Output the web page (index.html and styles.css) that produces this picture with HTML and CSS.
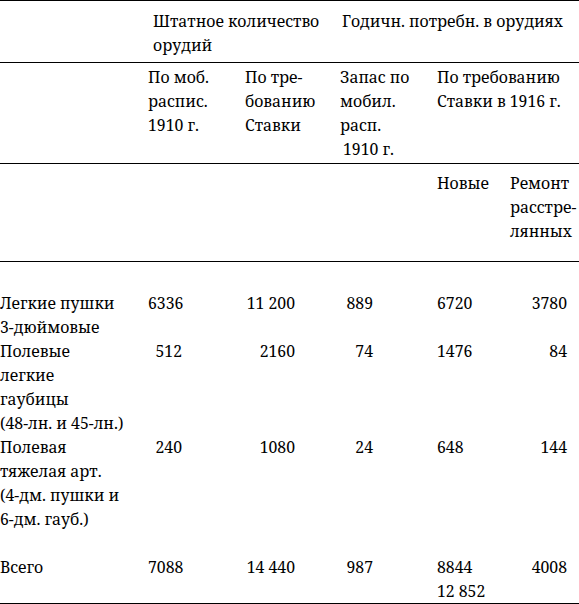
FILE: index.html
```html
<!DOCTYPE html>
<html lang="ru">
<head>
<meta charset="utf-8">
<link rel="stylesheet" href="styles.css">
</head>
<body>
<table class="t">
  <colgroup>
    <col class="c1"><col class="c2"><col class="c3"><col class="c4"><col class="c5"><col class="c6">
  </colgroup>
  <thead>
    <tr class="h1">
      <th></th>
      <th colspan="2" class="shtat">Штатное количество<br>орудий</th>
      <th colspan="3" class="god">Годичн. потребн. в орудиях</th>
    </tr>
    <tr class="h2">
      <th></th>
      <th>По моб.<br>распис.<br>1910 г.</th>
      <th class="c3h">По тре-<br>бованию<br>Ставки</th>
      <th>Запас по<br>мобил.<br>расп.<br><span class="ind">1910 г.</span></th>
      <th colspan="2">По требованию<br>Ставки в 1916 г.</th>
    </tr>
    <tr class="h3">
      <th></th><th></th><th></th><th></th>
      <th>Новые</th>
      <th>Ремонт<br>расстре-<br>лянных</th>
    </tr>
  </thead>
  <tbody>
    <tr class="first">
      <td class="lbl">Легкие пушки<br>3-дюймовые</td>
      <td class="n2">6336</td>
      <td class="n3">11 200</td>
      <td class="n4">889</td>
      <td class="n5">6720</td>
      <td class="n6">3780</td>
    </tr>
    <tr>
      <td class="lbl">Полевые<br>легкие<br>гаубицы<br>(48-лн. и 45-лн.)</td>
      <td class="n2">512</td>
      <td class="n3">2160</td>
      <td class="n4">74</td>
      <td class="n5">1476</td>
      <td class="n6">84</td>
    </tr>
    <tr>
      <td class="lbl">Полевая<br>тяжелая арт.<br>(4-дм. пушки и<br>6-дм. гауб.)</td>
      <td class="n2">240</td>
      <td class="n3">1080</td>
      <td class="n4">24</td>
      <td class="n5">648</td>
      <td class="n6">144</td>
    </tr>
    <tr class="total">
      <td class="lbl">Всего</td>
      <td class="n2">7088</td>
      <td class="n3">14 440</td>
      <td class="n4">987</td>
      <td class="n5">8844<span class="sum">12 852</span></td>
      <td class="n6">4008</td>
    </tr>
  </tbody>
</table>
</body>
</html>
```
FILE: styles.css
```css
html, body {
  margin: 0;
  padding: 0;
  background: #fff;
}
body {
  font-family: "Noto Serif", "Liberation Serif", serif;
  font-size: 15.8px;
  line-height: 24px;
  color: #000;
}
.t {
  width: 579px;
  border-collapse: collapse;
  table-layout: fixed;
  border-top: 1px solid #000;
  border-bottom: 1px solid #000;
}
.c1 { width: 148px; }
.c2 { width: 95px; }
.c3 { width: 97px; }
.c4 { width: 97px; }
.c5 { width: 73px; }
.c6 { width: 69px; }
th, td {
  padding: 0;
  vertical-align: top;
  text-align: left;
  font-weight: normal;
  white-space: nowrap;
}
thead tr { border-bottom: 1px solid #000; }
.h1 th { padding-top: 8px; padding-bottom: 5px; }
.h2 th { padding-top: 2px; padding-bottom: 2px; }
.h3 th { padding-top: 7px; padding-bottom: 18px; }
.shtat { padding-left: 5px; }
.god { padding-left: 2px; }
.c3h { padding-left: 2px; }
.ind { padding-left: 3px; }
.first td { padding-top: 29px; }
.total td { padding-top: 24px; }
.lbl { padding-left: 0; }
.n2, .n3, .n4, .n5, .n6 { text-align: right; }
.n2 { padding-right: 61px; }
.n3 { padding-right: 45px; }
.n4 { padding-right: 64px; }
.n5 { padding-right: 47px; }
.n6 { padding-right: 12px; }
.sum {
  display: block;
  margin-right: -15px;
}
```
